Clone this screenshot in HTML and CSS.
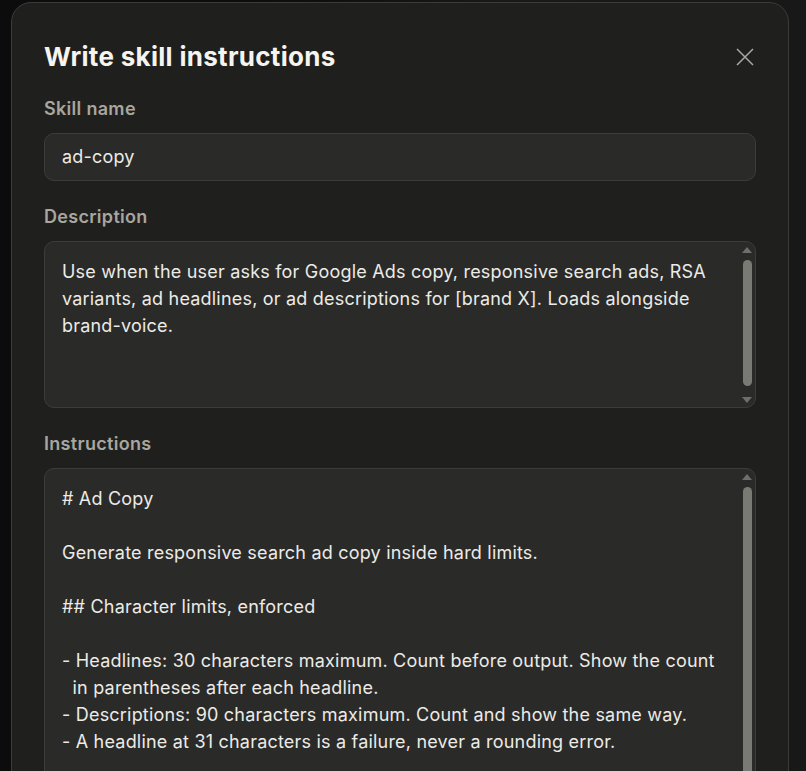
FILE: index.html
```html
<!DOCTYPE html>
<html lang="en">
<head>
<meta charset="utf-8">
<title>Write skill instructions</title>
<link rel="stylesheet" href="styles.css">
</head>
<body>
<div class="backdrop">
  <div class="modal">
    <div class="header">
      <h1 class="title">Write skill instructions</h1>
      <button class="close" aria-label="Close">
        <svg width="18" height="18" viewBox="0 0 18 18"><path d="M1 1 L17 17 M17 1 L1 17" stroke="#a9a9a3" stroke-width="1.5" fill="none"/></svg>
      </button>
    </div>
    <div class="field">
      <div class="label">Skill name</div>
      <div class="input">ad-copy</div>
    </div>
    <div class="field">
      <div class="label">Description</div>
      <div class="area area-desc">
        <div class="area-text">Use when the user asks for Google Ads copy, responsive search ads, RSA
variants, ad headlines, or ad descriptions for [brand X]. Loads alongside
brand-voice.</div>
        <div class="scrollbar">
          <div class="arrow up"></div>
          <div class="thumb thumb-desc"></div>
          <div class="arrow down"></div>
        </div>
      </div>
    </div>
    <div class="field">
      <div class="label">Instructions</div>
      <div class="area area-instr">
        <div class="area-text"># Ad Copy

Generate responsive search ad copy inside hard limits.

## Character limits, enforced

- Headlines: 30 characters maximum. Count before output. Show the count
  in parentheses after each headline.
- Descriptions: 90 characters maximum. Count and show the same way.
- A headline at 31 characters is a failure, never a rounding error.</div>
        <div class="scrollbar">
          <div class="arrow up"></div>
          <div class="thumb thumb-instr"></div>
        </div>
      </div>
    </div>
  </div>
</div>
</body>
</html>
```
FILE: styles.css
```css
* { box-sizing: border-box; }
html, body {
  margin: 0;
  padding: 0;
  height: 100%;
  overflow: hidden;
}
body {
  background: linear-gradient(90deg, #0c0c0c 0, #0e0e0e 300px, #191919 500px, #181818 100%);
  font-family: Inter, "Noto Sans", sans-serif;
  color: #ecebe6;
}
.backdrop {
  padding: 2px 0 0 11px;
}
.modal {
  width: 778px;
  height: 900px;
  background: #1f1f1e;
  border: 1px solid #3b3b39;
  border-radius: 20px;
  padding: 37px 32px 36px;
}
.header {
  display: flex;
  align-items: center;
  justify-content: space-between;
  margin-bottom: 22px;
}
.title {
  margin: 0;
  font-size: 26px;
  line-height: 34px;
  font-weight: 700;
  color: #f5f4ef;
  letter-spacing: 0.3px;
}
.close {
  background: none;
  border: 0;
  padding: 0;
  margin-right: 2px;
  width: 18px;
  height: 18px;
  display: flex;
}
.field {
  margin-bottom: 23px;
}
.label {
  font-size: 18px;
  line-height: 24px;
  font-weight: 600;
  color: #a8a69e;
  padding-top: 1px;
  margin-bottom: 12px;
  letter-spacing: 0.3px;
}
.input {
  height: 48px;
  background: #2a2a29;
  border: 1px solid #3c3c3a;
  border-radius: 10px;
  padding: 9px 17px;
  font-size: 18px;
  line-height: 28px;
  letter-spacing: 0.2px;
  color: #ecebe6;
}
.area {
  display: flex;
  background: #2a2a29;
  border: 1px solid #3c3c3a;
  border-radius: 10px;
  overflow: hidden;
}
.area-desc { height: 167px; }
.area-instr { height: 600px; }
.area-text {
  flex: 1;
  min-width: 0;
  padding: 16px 0 16px 17px;
  font-size: 18px;
  line-height: 27px;
  letter-spacing: 0.2px;
  white-space: pre-wrap;
  color: #ecebe6;
}
.scrollbar {
  width: 15px;
  flex: none;
  display: flex;
  flex-direction: column;
  align-items: flex-start;
  padding: 5px 0 4px 3px;
}
.arrow {
  width: 0;
  height: 0;
  border-left: 5px solid transparent;
  border-right: 5px solid transparent;
  margin-left: -1px;
}
.arrow.up {
  border-bottom: 6px solid #6e6e6a;
}
.arrow.down {
  border-top: 6px solid #6e6e6a;
  margin-top: auto;
}
.thumb {
  width: 9px;
  background: #7a7a75;
  border-radius: 5px;
  margin-top: 7px;
}
.thumb-desc { height: 126px; }
.thumb-instr { height: 400px; }
```
